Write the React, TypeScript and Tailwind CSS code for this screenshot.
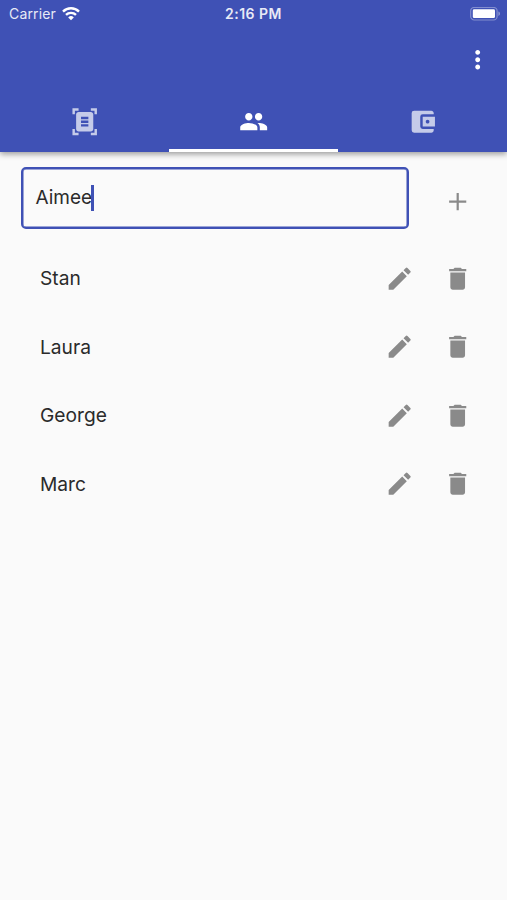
import { useState } from "react";
import {
  MdAccountBalanceWallet,
  MdDelete,
  MdDocumentScanner,
  MdEdit,
  MdMoreVert,
  MdPeople,
} from "react-icons/md";

const tabs = [
  { id: "receipt", label: "Receipt", Icon: MdDocumentScanner },
  { id: "people", label: "People", Icon: MdPeople },
  { id: "wallet", label: "Wallet", Icon: MdAccountBalanceWallet },
];

function StatusBar() {
  return (
    <div className="grid h-7 grid-cols-3 items-center text-[14px] leading-none text-[#e8eaf6]">
      <div className="flex items-center gap-[6px] pl-[9px]">
        <span className="tracking-[0.15px]">Carrier</span>
        <svg width="18" height="14" viewBox="0 0 18 14" fill="none" stroke="white" strokeWidth="2.4">
          <path d="M1 4.6a11.4 11.4 0 0 1 16 0" />
          <path d="M4 7.9a7.1 7.1 0 0 1 10 0" />
          <path d="M9 13.2 6.2 10.4a4 4 0 0 1 5.6 0z" fill="white" stroke="none" />
        </svg>
      </div>
      <span className="text-center font-semibold tracking-[0.5px]">2:16 PM</span>
      <div className="flex justify-end pr-[6px]">
        <svg width="31" height="14" viewBox="0 0 31 14">
          <rect x="0.7" y="0.4" width="26.4" height="12.6" rx="3.6" fill="none" stroke="white" strokeOpacity="0.35" strokeWidth="1.2" />
          <rect x="2.8" y="2.3" width="22.2" height="8.8" rx="1.4" fill="white" />
          <path d="M28.4 4.5v4.4c1-.4 1.6-1.2 1.6-2.2s-.6-1.8-1.6-2.2z" fill="white" fillOpacity="0.4" />
        </svg>
      </div>
    </div>
  );
}

export default function App() {
  const [activeTab, setActiveTab] = useState("people");
  const [people, setPeople] = useState(["Stan", "Laura", "George", "Marc"]);
  const [name, setName] = useState("Aimee");

  const handleAdd = () => {
    if (!name) return;
    setPeople((prev) => [...prev, name]);
    setName("");
  };

  const handleDelete = (idx: number) => setPeople((prev) => prev.filter((_, i) => i !== idx));

  return (
    <div className="min-h-screen bg-[#fafafa] font-[Inter,sans-serif] text-[#2b2b2b]">
      {/* App bar */}
      <header className="flex h-[152px] flex-col bg-[#3f51b5] shadow-[0_2px_6px_rgba(0,0,0,0.4)]">
        <StatusBar />
        <div className="flex h-16 items-center justify-end pr-[15px]">
          <button aria-label="More">
            <MdMoreVert className="size-[29.4px] text-white" />
          </button>
        </div>
        <nav className="grid flex-1 grid-cols-3">
          {tabs.map(({ id, label, Icon }) => (
            <button
              key={id}
              aria-label={label}
              onClick={() => setActiveTab(id)}
              className={
                activeTab === id
                  ? "flex items-center justify-center border-b-[3px] border-white pt-[3px] pl-px text-white"
                  : "flex items-center justify-center border-b-[3px] border-transparent pt-[3px] pl-px text-[#c5cbe9]"
              }
            >
              <Icon className="size-[29.4px]" />
            </button>
          ))}
        </nav>
      </header>

      <main className="pt-[15px]">
        {/* New person */}
        <div className="flex items-center pr-[34.3px] pl-[20.5px]">
          <div className="flex h-[62px] w-[388.5px] items-center rounded-[5px] border-2 border-[#3f51b5] pb-[1px] pl-[13px] shadow-[inset_0_0_0_0.5px_#3f51b5]">
            <span className="text-[19px] leading-none">{name}</span>
            <span className="-ml-px h-[26px] w-[2.5px] bg-[#3f51b5]" />
          </div>
          <button aria-label="Add" onClick={handleAdd} className="ml-auto pt-[7px]">
            <svg className="size-[29.4px]" viewBox="0 0 24 24" fill="none" stroke="#8a8a8a" strokeWidth="1.8">
              <path d="M12 5v14M5 12h14" />
            </svg>
          </button>
        </div>

        {/* People */}
        <ul className="pt-[15.3px]">
          {people.map((person, idx) => (
            <li key={idx} className="flex h-[68.4px] items-center pr-[34.3px] pl-10">
              <span className="flex-1 pt-px text-[19.2px] leading-none">{person}</span>
              <button aria-label="Edit" className="mr-[29px]">
                <MdEdit className="size-[29.4px] text-[#8a8a8a]" />
              </button>
              <button aria-label="Delete" onClick={() => handleDelete(idx)}>
                <MdDelete className="size-[29.4px] text-[#8a8a8a]" />
              </button>
            </li>
          ))}
        </ul>
      </main>
    </div>
  );
}
